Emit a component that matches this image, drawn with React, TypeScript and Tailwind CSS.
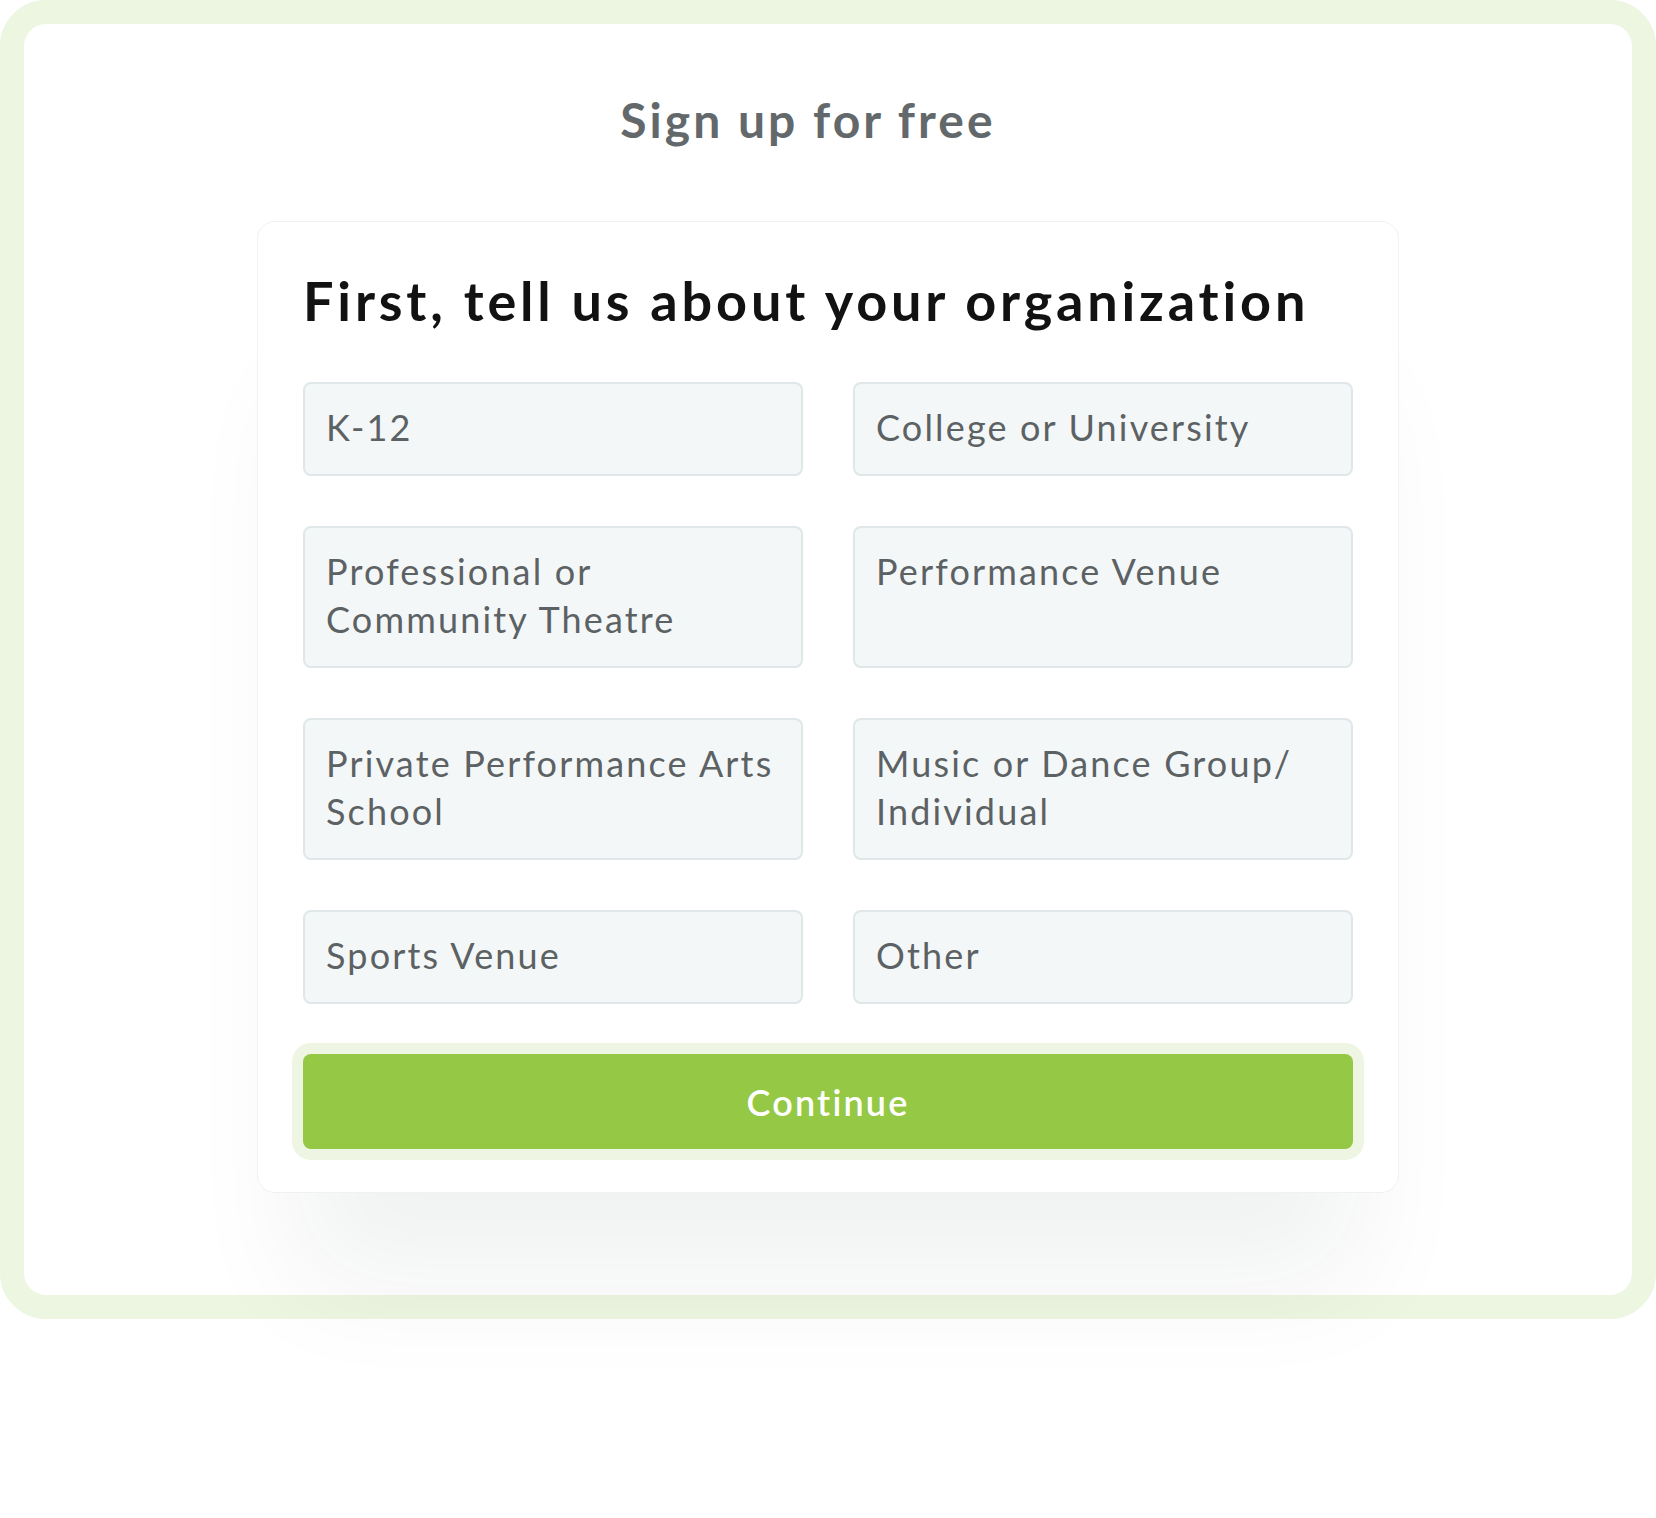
const options = [
  ["K-12"],
  ["College or University"],
  ["Professional or", "Community Theatre"],
  ["Performance Venue"],
  ["Private Performance Arts", "School"],
  ["Music or Dance Group/", "Individual"],
  ["Sports Venue"],
  ["Other"],
];

function OptionBox({ lines }: { lines: string[] }) {
  return (
    <div
      role="button"
      className="cursor-pointer rounded-[8px] border-2 border-[#dfe7e8] bg-[#f4f7f8] px-[21px] pt-[19px] pb-[23px] text-[36px] leading-[48px] tracking-[0.06em] text-[#5c6264]"
    >
      {lines.map((line) => (
        <div key={line} className="whitespace-nowrap">
          {line}
        </div>
      ))}
    </div>
  );
}

export default function App() {
  return (
    <div className="min-h-[1518px] bg-white font-['Lato',sans-serif]">
      <div className="flex h-[1319px] flex-col items-center rounded-[46px] border-[24px] border-[#ecf6e0] bg-white">
        <h1 className="mt-[72px] mr-[40px] text-[48px] font-bold leading-none tracking-[0.063em] text-[#63686b]">
          Sign up for free
        </h1>

        <div className="mt-[77px] w-[1142px] rounded-[18px] border border-[#f0f1f1] bg-white px-[45px] pt-[52px] pb-[43px] shadow-[0_130px_110px_-40px_rgba(20,30,30,0.06)]">
          <h2 className="whitespace-nowrap text-[54px] font-bold leading-none tracking-[0.071em] text-[#121212]">
            First, tell us about your organization
          </h2>

          <div className="mt-[54px] grid grid-cols-2 gap-[50px]">
            {options.map((lines) => (
              <OptionBox key={lines.join(" ")} lines={lines} />
            ))}
          </div>

          <button
            type="button"
            className="mt-[50px] h-[95px] w-full rounded-[8px] bg-[#95c844] text-[36px] font-semibold tracking-[0.06em] text-white shadow-[0_0_0_11px_#eef5e3]"
          >
            Continue
          </button>
        </div>
      </div>
    </div>
  );
}
